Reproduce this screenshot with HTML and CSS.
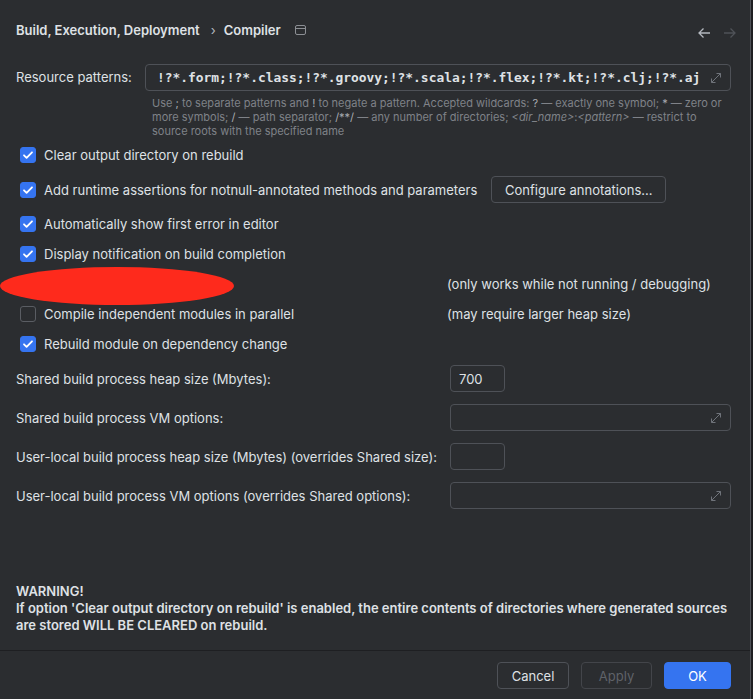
FILE: index.html
```html
<!DOCTYPE html>
<html>
<head>
<meta charset="utf-8">
<title>Compiler</title>
<link rel="stylesheet" href="styles.css">
</head>
<body>
<div class="dialog">
  <header class="top">
    <div class="crumbs">
      <span class="crumb">Build, Execution, Deployment</span>
      <span class="sep">›</span>
      <span class="crumb">Compiler</span>
      <svg class="win-icon" width="11" height="10" viewBox="0 0 11 10"><rect x="0.5" y="0.5" width="10" height="9" rx="1.5" fill="none" stroke="#8c8f94"/><path d="M0.5 3.5H10.5" stroke="#8c8f94"/></svg>
    </div>
    <div class="nav">
      <svg width="14" height="14" viewBox="0 0 14 14"><path d="M13 7H2M6.5 2.5L2 7l4.5 4.5" fill="none" stroke="#b4b8bf" stroke-width="1.3"/></svg>
      <svg width="14" height="14" viewBox="0 0 14 14"><path d="M1 7h11M7.5 2.5L12 7l-4.5 4.5" fill="none" stroke="#4f5257" stroke-width="1.3"/></svg>
    </div>
  </header>

  <main class="content">
    <div class="res-row">
      <div class="res-label">Resource patterns:</div>
      <div class="res-field">
        <div class="input wide mono">
          <span class="val">!?*.form;!?*.class;!?*.groovy;!?*.scala;!?*.flex;!?*.kt;!?*.clj;!?*.aj</span>
          <svg class="expand" width="12" height="12" viewBox="0 0 12 12"><path d="M1.5 10.5l9-9M6.5 1.5h4v4M1.5 6.5v4h4" fill="none" stroke="#6f737a"/></svg>
        </div>
        <p class="help">Use <b>;</b> to separate patterns and <b>!</b> to negate a pattern. Accepted wildcards: <b>?</b> — exactly one symbol; <b>*</b> — zero or<br>more symbols; <b>/</b> — path separator; <b>/**/</b> — any number of directories; <i>&lt;dir_name&gt;</i>:<i>&lt;pattern&gt;</i> — restrict to<br>source roots with the specified name</p>
      </div>
    </div>

    <ul class="checks">
      <li class="check-row">
        <span class="check"><span class="cb on"><svg width="16" height="16" viewBox="0 0 16 16"><path d="M4 8.3l2.6 2.6L12 5.3" fill="none" stroke="#fff" stroke-width="1.8" stroke-linecap="round" stroke-linejoin="round"/></svg></span><span>Clear output directory on rebuild</span></span>
      </li>
      <li class="check-row tall">
        <span class="check"><span class="cb on"><svg width="16" height="16" viewBox="0 0 16 16"><path d="M4 8.3l2.6 2.6L12 5.3" fill="none" stroke="#fff" stroke-width="1.8" stroke-linecap="round" stroke-linejoin="round"/></svg></span><span>Add runtime assertions for notnull-annotated methods and parameters</span></span>
        <button class="btn annot">Configure annotations...</button>
      </li>
      <li class="check-row">
        <span class="check"><span class="cb on"><svg width="16" height="16" viewBox="0 0 16 16"><path d="M4 8.3l2.6 2.6L12 5.3" fill="none" stroke="#fff" stroke-width="1.8" stroke-linecap="round" stroke-linejoin="round"/></svg></span><span>Automatically show first error in editor</span></span>
      </li>
      <li class="check-row">
        <span class="check"><span class="cb on"><svg width="16" height="16" viewBox="0 0 16 16"><path d="M4 8.3l2.6 2.6L12 5.3" fill="none" stroke="#fff" stroke-width="1.8" stroke-linecap="round" stroke-linejoin="round"/></svg></span><span>Display notification on build completion</span></span>
      </li>
      <li class="check-row">
        <span class="check fixed"></span><span class="hint">(only works while not running / debugging)</span>
      </li>
      <li class="check-row">
        <span class="check fixed"><span class="cb"></span><span>Compile independent modules in parallel</span></span><span class="hint">(may require larger heap size)</span>
      </li>
      <li class="check-row">
        <span class="check"><span class="cb on"><svg width="16" height="16" viewBox="0 0 16 16"><path d="M4 8.3l2.6 2.6L12 5.3" fill="none" stroke="#fff" stroke-width="1.8" stroke-linecap="round" stroke-linejoin="round"/></svg></span><span>Rebuild module on dependency change</span></span>
      </li>
    </ul>

    <div class="fields">
      <div class="f-label">Shared build process heap size (Mbytes):</div>
      <div class="input small">700</div>
      <div class="f-label">Shared build process VM options:</div>
      <div class="input wide"><svg class="expand" width="12" height="12" viewBox="0 0 12 12"><path d="M1.5 10.5l9-9M6.5 1.5h4v4M1.5 6.5v4h4" fill="none" stroke="#6f737a"/></svg></div>
      <div class="f-label">User-local build process heap size (Mbytes) (overrides Shared size):</div>
      <div class="input small"></div>
      <div class="f-label">User-local build process VM options (overrides Shared options):</div>
      <div class="input wide"><svg class="expand" width="12" height="12" viewBox="0 0 12 12"><path d="M1.5 10.5l9-9M6.5 1.5h4v4M1.5 6.5v4h4" fill="none" stroke="#6f737a"/></svg></div>
    </div>
  </main>

  <section class="warning">
    <p>WARNING!<br>If option 'Clear output directory on rebuild' is enabled, the entire contents of directories where generated sources<br>are stored WILL BE CLEARED on rebuild.</p>
  </section>

  <footer class="footer">
    <button class="btn">Cancel</button>
    <button class="btn disabled">Apply</button>
    <button class="btn primary">OK</button>
  </footer>

  <div class="redact"></div>
</div>
</body>
</html>
```

FILE: styles.css
```css
* { box-sizing: border-box; }

html, body {
  margin: 0;
  padding: 0;
  background: #1e1f22;
}

body {
  font-family: Inter, "Noto Sans", sans-serif;
  font-size: 13px;
  color: #dfe1e5;
}

.dialog {
  position: relative;
  width: 751px;
  height: 699px;
  background: #2b2d30;
  border-right: 1px solid #4e5157;
  display: flex;
  flex-direction: column;
}

.top {
  height: 60px;
  display: flex;
  align-items: center;
  justify-content: space-between;
  padding: 0 13px 0 16px;
}

.crumbs {
  display: flex;
  align-items: center;
  font-weight: 600;
  font-size: 13px;
  color: #dfe1e5;
}

.sep {
  font-weight: 400;
  margin: 0 8px 0 11px;
  color: #b4b8bf;
}

.win-icon {
  margin-left: 14px;
}

.nav {
  display: flex;
  gap: 12px;
  padding-top: 6px;
}

.content {
  flex: 1;
  padding: 4px 19px 0 16px;
}

.res-row {
  display: flex;
}

.res-label {
  width: 129px;
  height: 27px;
  line-height: 27px;
}

.res-field {
  flex: 1;
}

.input {
  height: 27px;
  border: 1px solid #4e5157;
  border-radius: 4px;
  display: flex;
  align-items: center;
  padding: 0 8px;
  color: #dfe1e5;
}

.input.wide {
  justify-content: space-between;
}

.res-field .input {
  padding: 0 8px 0 11px;
}

.input .expand {
  margin-left: auto;
}

.mono {
  font-family: "DejaVu Sans Mono", "Liberation Mono", monospace;
  font-size: 12.9px;
  font-weight: 600;
  letter-spacing: 0;
}

.val {
  white-space: nowrap;
  overflow: hidden;
}

.help {
  margin: 5px 0 0 7px;
  font-size: 11px;
  line-height: 14px;
  color: #7f8288;
}

.help b {
  font-weight: 400;
  color: #a9acb2;
}

.help i {
  font-style: italic;
}

.checks {
  list-style: none;
  margin: 2px 0 0 0;
  padding: 0 0 0 4px;
}

.check-row {
  height: 30px;
  display: flex;
  align-items: center;
}

.check-row.tall {
  height: 39px;
  gap: 14px;
}

.check {
  display: flex;
  align-items: center;
  gap: 8px;
}

.check.fixed {
  width: 427px;
}

.cb {
  width: 16px;
  height: 16px;
  border-radius: 3px;
  border: 1px solid #5a5d63;
  display: inline-flex;
}

.cb.on {
  background: #3574f0;
  border-color: #3574f0;
}

.cb svg {
  margin: -1px;
}

.hint {
  color: #dfe1e5;
}

.btn {
  font-family: Inter, "Noto Sans", sans-serif;
  font-size: 13px;
  height: 27px;
  border: 1px solid #4e5157;
  border-radius: 4px;
  background: transparent;
  color: #dfe1e5;
  padding: 0;
}

.annot {
  width: 175px;
}

.fields {
  display: grid;
  grid-template-columns: 434px 1fr;
  grid-auto-rows: 39px;
  align-items: center;
}

.input.small {
  width: 55px;
}

.warning {
  padding: 0 16px 16px;
}

.warning p {
  margin: 0;
  font-size: 13px;
  font-weight: 600;
  line-height: 17px;
  color: #dfe1e5;
}

.footer {
  height: 49px;
  border-top: 1px solid #1e1f22;
  display: flex;
  justify-content: flex-end;
  gap: 12px;
  padding: 11px 19px 0 0;
}

.footer .btn {
  width: 72px;
}

.footer .btn.primary {
  width: 67px;
  background: #3574f0;
  border-color: #3574f0;
  color: #fff;
}

.footer .btn.disabled {
  width: 71px;
  color: #5f6268;
  border-color: #43454a;
}

.redact {
  position: absolute;
  left: 0;
  top: 267px;
  width: 234px;
  height: 38px;
  border-radius: 50%;
  background: #fe2a1c;
}
```
